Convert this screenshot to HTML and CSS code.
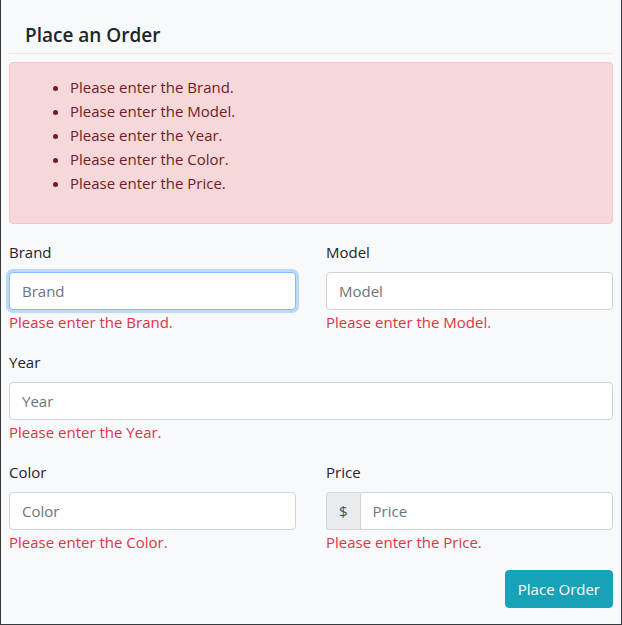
FILE: index.html
```html
<!DOCTYPE html>
<html lang="en">
<head>
<meta charset="utf-8">
<title>Place an Order</title>
<link rel="stylesheet" href="styles.css">
</head>
<body>
<main class="page">
  <h1 class="title">Place an Order</h1>
  <form class="order" novalidate>
    <div class="alert" role="alert">
      <ul class="alert-list">
        <li>Please enter the Brand.</li>
        <li>Please enter the Model.</li>
        <li>Please enter the Year.</li>
        <li>Please enter the Color.</li>
        <li>Please enter the Price.</li>
      </ul>
    </div>
    <div class="fields">
      <div class="field">
        <label for="brand">Brand</label>
        <input class="control focused" id="brand" type="text" placeholder="Brand">
        <span class="error">Please enter the Brand.</span>
      </div>
      <div class="field">
        <label for="model">Model</label>
        <input class="control" id="model" type="text" placeholder="Model">
        <span class="error">Please enter the Model.</span>
      </div>
      <div class="field wide">
        <label for="year">Year</label>
        <input class="control" id="year" type="text" placeholder="Year">
        <span class="error">Please enter the Year.</span>
      </div>
      <div class="field">
        <label for="color">Color</label>
        <input class="control" id="color" type="text" placeholder="Color">
        <span class="error">Please enter the Color.</span>
      </div>
      <div class="field">
        <label for="price">Price</label>
        <div class="group">
          <span class="prefix">$</span>
          <input class="control" id="price" type="text" placeholder="Price">
        </div>
        <span class="error">Please enter the Price.</span>
      </div>
    </div>
    <div class="actions">
      <button class="submit" type="button">Place Order</button>
    </div>
  </form>
</main>
</body>
</html>
```
FILE: styles.css
```css
* {
  box-sizing: border-box;
}

body {
  margin: 0;
  font-family: "Open Sans", "Noto Sans", sans-serif;
  font-size: 15px;
  line-height: 24px;
  color: #212529;
  background: #f8f9fb;
}

.page {
  min-height: 100vh;
  padding: 16px 8px;
  border: 1px solid #343a40;
  border-top: 0;
}

.title {
  margin: 0 0 8px;
  padding: 7px 16px 5px;
  border-bottom: 1px solid #e9ebed;
  font-size: 19px;
  font-weight: 600;
  line-height: 25px;
}

.alert {
  padding: 12px 20px 28px;
  border: 1px solid #f5c6cb;
  border-radius: 4px;
  color: #721c24;
  background: #f6d7da;
}

.alert-list {
  margin: 0;
  padding-left: 40px;
}

.fields {
  display: grid;
  grid-template-columns: 1fr 1fr;
  gap: 16px 30px;
  margin-top: 16px;
}

.field {
  display: flex;
  flex-direction: column;
  min-width: 0;
}

.wide {
  grid-column: 1 / -1;
}

label {
  margin-bottom: 8px;
}

.control {
  width: 100%;
  min-width: 0;
  height: 38px;
  padding: 6px 12px;
  border: 1px solid #ced4da;
  border-radius: 4px;
  font: inherit;
  color: #495057;
  background: #fff;
}

.control::placeholder {
  color: #6c757d;
  opacity: 1;
}

.focused,
.control:focus {
  border-color: #80bdff;
  outline: 0;
  box-shadow: 0 0 0 3px #bad9fb;
}

.error {
  color: #dc3545;
}

.group {
  display: flex;
}

.prefix {
  padding: 6px 12px;
  border: 1px solid #ced4da;
  border-right: 0;
  border-radius: 4px 0 0 4px;
  color: #495057;
  background: #e9ecef;
}

.group .control {
  flex: 1;
  border-radius: 0 4px 4px 0;
}

.actions {
  display: flex;
  justify-content: flex-end;
  margin-top: 16px;
}

.submit {
  padding: 6px 12px;
  border: 1px solid #17a2b8;
  border-radius: 4px;
  font: inherit;
  color: #fff;
  background: #17a2b8;
}
```
